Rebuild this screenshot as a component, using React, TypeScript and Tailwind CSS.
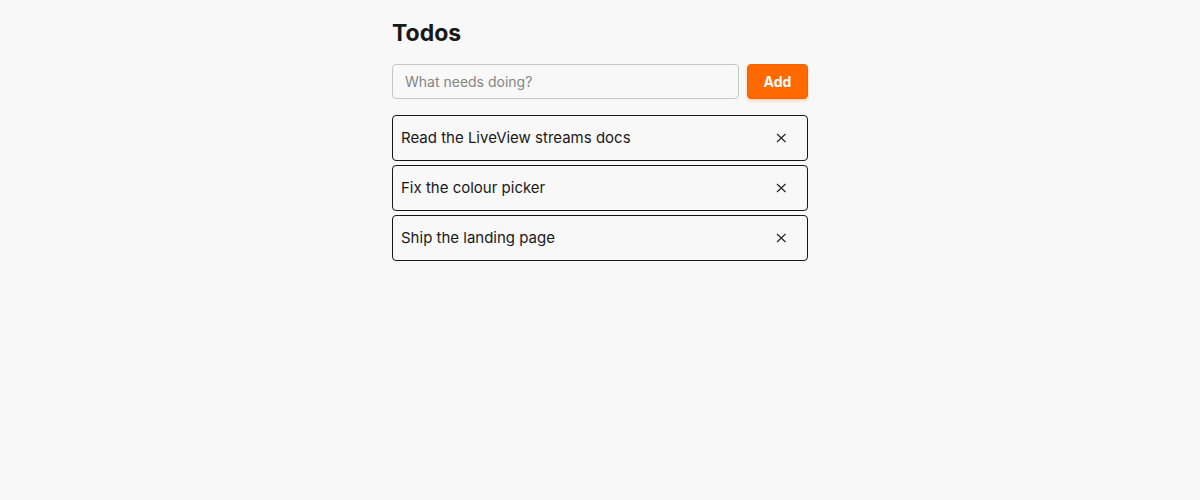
import { useState } from 'react'
import type { FormEvent } from 'react'

type Todo = {
    id: number
    title: string
}

const initial_todos: Todo[] = [
    { id: 1, title: "Read the LiveView streams docs" },
    { id: 2, title: "Fix the colour picker" },
    { id: 3, title: "Ship the landing page" },
]

const App = () => {
    const [todos, setTodos] = useState<Todo[]>(initial_todos);
    const [title, setTitle] = useState<string>("");

    const addTodo = (e: FormEvent) => {
        e.preventDefault();
        if (!title.trim()) return;
        setTodos([...todos, { id: Date.now(), title: title.trim() }]);
        setTitle("");
    }

    return (
        <div className="min-h-screen bg-[#f8f8f8] px-4 py-4 font-['Inter',sans-serif] text-[#18181b]">
            <main className="mx-auto max-w-[416px]">
                <h1 className="text-[23px] leading-[34px] font-bold">Todos</h1>

                <form onSubmit={addTodo} className="mt-[14px] flex gap-2">
                    <input
                        type="text"
                        aria-label="New todo"
                        placeholder="What needs doing?"
                        value={title}
                        onChange={(e) => setTitle(e.target.value)}
                        className="h-[35px] min-w-0 flex-1 rounded-sm border border-[#c6c6c6] px-3 text-sm placeholder:text-[#858585]"
                    />
                    <button
                        type="submit"
                        className="h-[35px] w-[61px] rounded-sm border border-[#f26300] bg-[#ff6900] text-sm font-bold text-white shadow-[0_2px_3px_#ff690040]"
                    >
                        Add
                    </button>
                </form>

                <ul className="mt-4 flex flex-col gap-1">
                    {todos.map((todo) => (
                        <li
                            key={todo.id}
                            className="flex items-center justify-between rounded-sm border border-[#18181b] p-2 text-[15px] leading-7"
                        >
                            <span>{todo.title}</span>
                            <button
                                type="button"
                                aria-label={`Delete ${todo.title}`}
                                onClick={() => setTodos(todos.filter((t) => t.id !== todo.id))}
                                className="px-3 py-2"
                            >
                                <svg viewBox="0 0 12 12" className="size-3" fill="none" stroke="#27272a" strokeWidth="1.2" aria-hidden="true">
                                    <path d="M2 2 L10.5 10 M10.5 2 L2 10" />
                                </svg>
                            </button>
                        </li>
                    ))}
                </ul>
            </main>
        </div>
    )
}

export default App
